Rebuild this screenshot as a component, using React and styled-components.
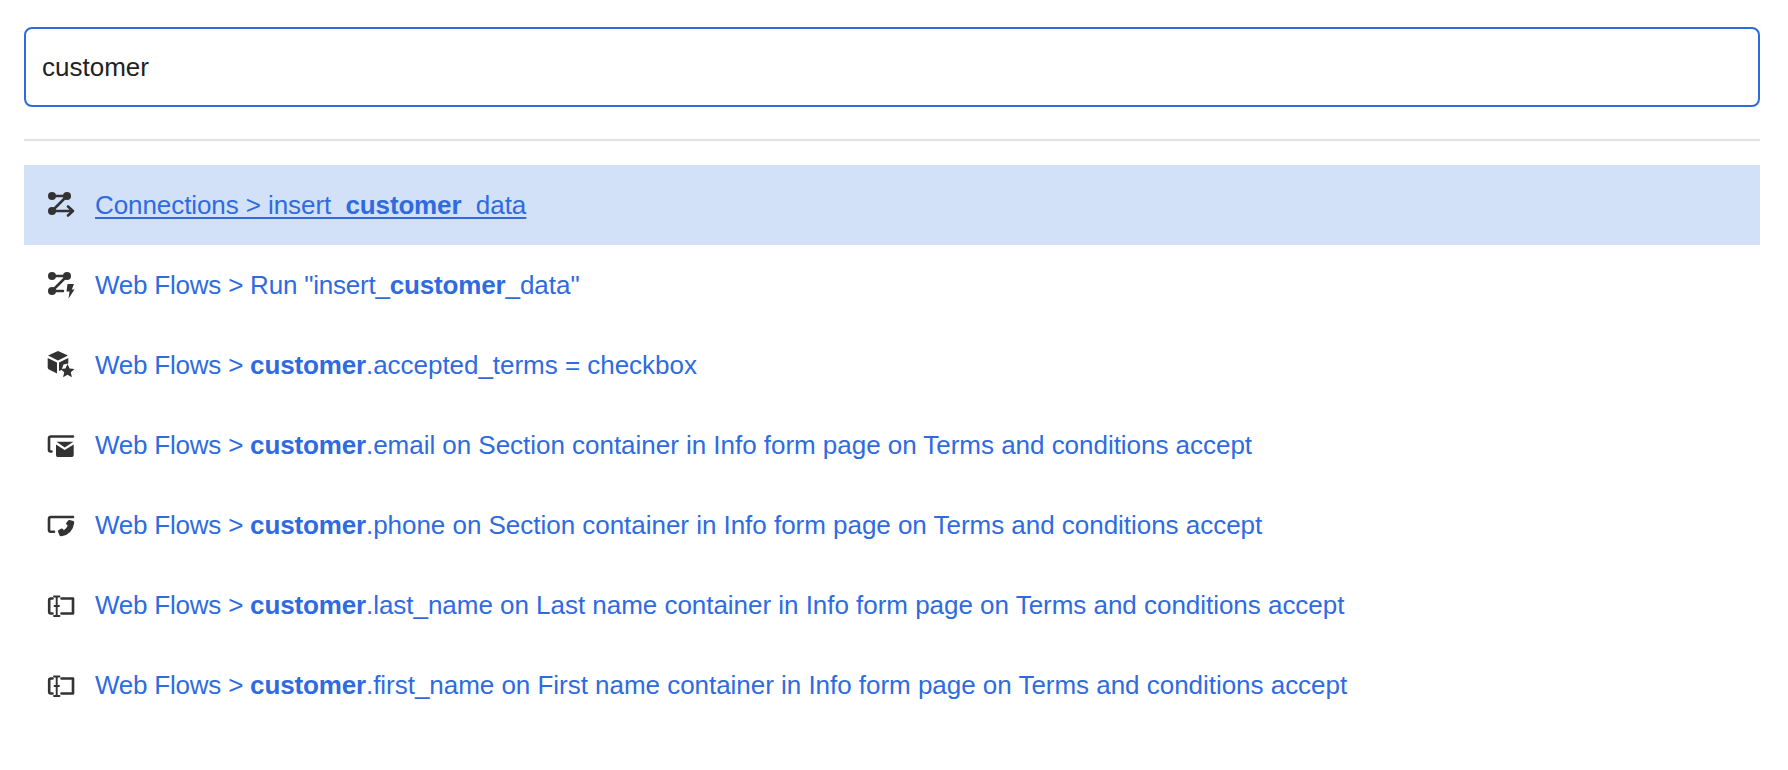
import styled, { createGlobalStyle } from "styled-components";

const GlobalStyle = createGlobalStyle`
    html, body {
        margin: 0;
        background: #ffffff;
        font-family: "Liberation Sans", Arial, sans-serif;
    }
`;

const Page = styled.div`
    padding: 27px 28px 0 24px;
`;

const SearchInput = styled.input`
    display: block;
    width: 100%;
    height: 80px;
    box-sizing: border-box;
    padding: 0 16px;
    border: 2px solid #2f6bdf;
    border-radius: 8px;
    outline: none;
    font-family: inherit;
    font-size: 26px;
    color: #222222;
`;

const Divider = styled.hr`
    height: 2px;
    margin: 32px 0 24px;
    border: none;
    background: #e2e2e2;
`;

const Results = styled.ul`
    margin: 0;
    padding: 0;
    list-style: none;
`;

const Row = styled.li`
    display: flex;
    align-items: center;
    gap: 19px;
    height: 80px;
    padding-left: 22px;
    background: ${props => (props.$active ? "#d2e1f8" : "transparent")};
`;

const RowLink = styled.a`
    font-size: 26px;
    color: #2f6bdf;
    letter-spacing: -0.03px;
    text-decoration: ${props => (props.$active ? "underline" : "none")};
    text-decoration-thickness: 2px;
    text-underline-offset: 3px;
    white-space: nowrap;
    cursor: pointer;
`;

const Crumb = styled.span`
    letter-spacing: ${props => (props.$active ? "-0.08px" : "-0.22px")};
`;

const Match = styled.strong`
    font-weight: 700;
    letter-spacing: -0.15px;
`;

const IconBox = styled.svg`
    flex: none;
    width: 30px;
    height: 30px;
    fill: #333333;
    stroke: #333333;
    stroke-width: 2.6;
    stroke-linecap: round;
    stroke-linejoin: round;
`;

const Solid = styled.path`
    stroke: none;
`;

const Hollow = styled.path`
    fill: none;
`;

const ConnectionIcon = () => (
    <IconBox viewBox="0 0 30 30">
        <circle cx="6" cy="6" r="4" stroke="none" />
        <circle cx="21" cy="6" r="4" stroke="none" />
        <circle cx="6" cy="21" r="4" stroke="none" />
        <Hollow d="M6 6H21L6 21H27M22 16.5L27 21L22 25.5" />
    </IconBox>
);

const FlowRunIcon = () => (
    <IconBox viewBox="0 0 30 30">
        <circle cx="6" cy="6" r="4" stroke="none" />
        <circle cx="21" cy="6" r="4" stroke="none" />
        <circle cx="6" cy="21" r="4" stroke="none" />
        <Hollow d="M6 6H21L6 21H17" />
        <Solid d="M21.5 14H28L25.8 19.5H28.5L22.5 28.5L23.5 21.5H20.5Z" />
    </IconBox>
);

const ObjectIcon = () => (
    <IconBox viewBox="0 0 30 30">
        <Solid d="M12 1L22 5.5L12 10.5L2 5.5ZM1.7 8V17.5Q1.7 18.8 3 19.5L11 23.5V12.5ZM13 12.5V21L15.5 20L17.5 14.5L22.3 13.5V8Z" />
        <Solid d="M21.5 14L23.6 18.5L28.5 19L24.8 22.3L25.9 27.2L21.5 24.7L17.1 27.2L18.2 22.3L14.5 19L19.4 18.5Z" />
    </IconBox>
);

const EmailIcon = () => (
    <IconBox viewBox="0 0 30 30">
        <Hollow d="M5.5 21.5H4.5Q3 21.5 3 20V8.5Q3 6.5 5 6.5H27" />
        <Solid d="M10 14.5L18.7 20L27.7 14.5V25Q27.7 27 26 27H11.5Q10 27 10 25Z" />
        <Solid d="M10.5 11.8H27.5L18.7 17.4Z" />
    </IconBox>
);

const PhoneIcon = () => (
    <IconBox viewBox="0 0 30 30">
        <Hollow d="M8 21.7H4.5Q3 21.7 3 20V9Q3 7 5 7H27" />
        <Solid d="M23.5 10L27.5 11Q28.4 11.5 28.2 13Q26.5 24.5 15.5 26.2Q14 26.4 13.3 25L12 21.5Q11.7 20.5 12.7 20L15.5 18.6Q16.4 18.3 17 19.1L17.8 20.2Q20.6 18.8 21.7 15.5L20.5 14.6Q19.9 14 20.2 13L22 10.7Q22.6 9.8 23.5 10Z" />
    </IconBox>
);

const FieldIcon = () => (
    <IconBox viewBox="0 0 30 30">
        <Hollow d="M6.5 8.5H4.8Q3.2 8.5 3.2 10V22Q3.2 23.5 4.8 23.5H6.5" />
        <Hollow d="M15.5 8.5H27V23.5H15.5" />
        <Hollow d="M8 6.5H13.5M10.7 6.5V26M8 26H13.5M8.5 16H13" strokeWidth="1.9" />
    </IconBox>
);

const rows = [
    { icon: ConnectionIcon, before: "Connections > insert_", after: "_data", active: true },
    { icon: FlowRunIcon, before: 'Web Flows > Run "insert_', after: '_data"' },
    { icon: ObjectIcon, before: "Web Flows > ", after: ".accepted_terms = checkbox" },
    {
        icon: EmailIcon,
        before: "Web Flows > ",
        after: ".email on Section container in Info form page on Terms and conditions accept",
    },
    {
        icon: PhoneIcon,
        before: "Web Flows > ",
        after: ".phone on Section container in Info form page on Terms and conditions accept",
    },
    {
        icon: FieldIcon,
        before: "Web Flows > ",
        after: ".last_name on Last name container in Info form page on Terms and conditions accept",
    },
    {
        icon: FieldIcon,
        before: "Web Flows > ",
        after: ".first_name on First name container in Info form page on Terms and conditions accept",
    },
];

export default function App() {
    return (
        <Page>
            <GlobalStyle />
            <SearchInput type="text" value="customer" readOnly />
            <Divider />
            <Results>
                {rows.map(({ icon: Icon, before, after, active }, i) => (
                    <Row key={i} $active={active}>
                        <Icon />
                        <RowLink $active={active}>
                            <Crumb $active={active}>{before}</Crumb>
                            <Match>customer</Match>
                            {after}
                        </RowLink>
                    </Row>
                ))}
            </Results>
        </Page>
    );
}
